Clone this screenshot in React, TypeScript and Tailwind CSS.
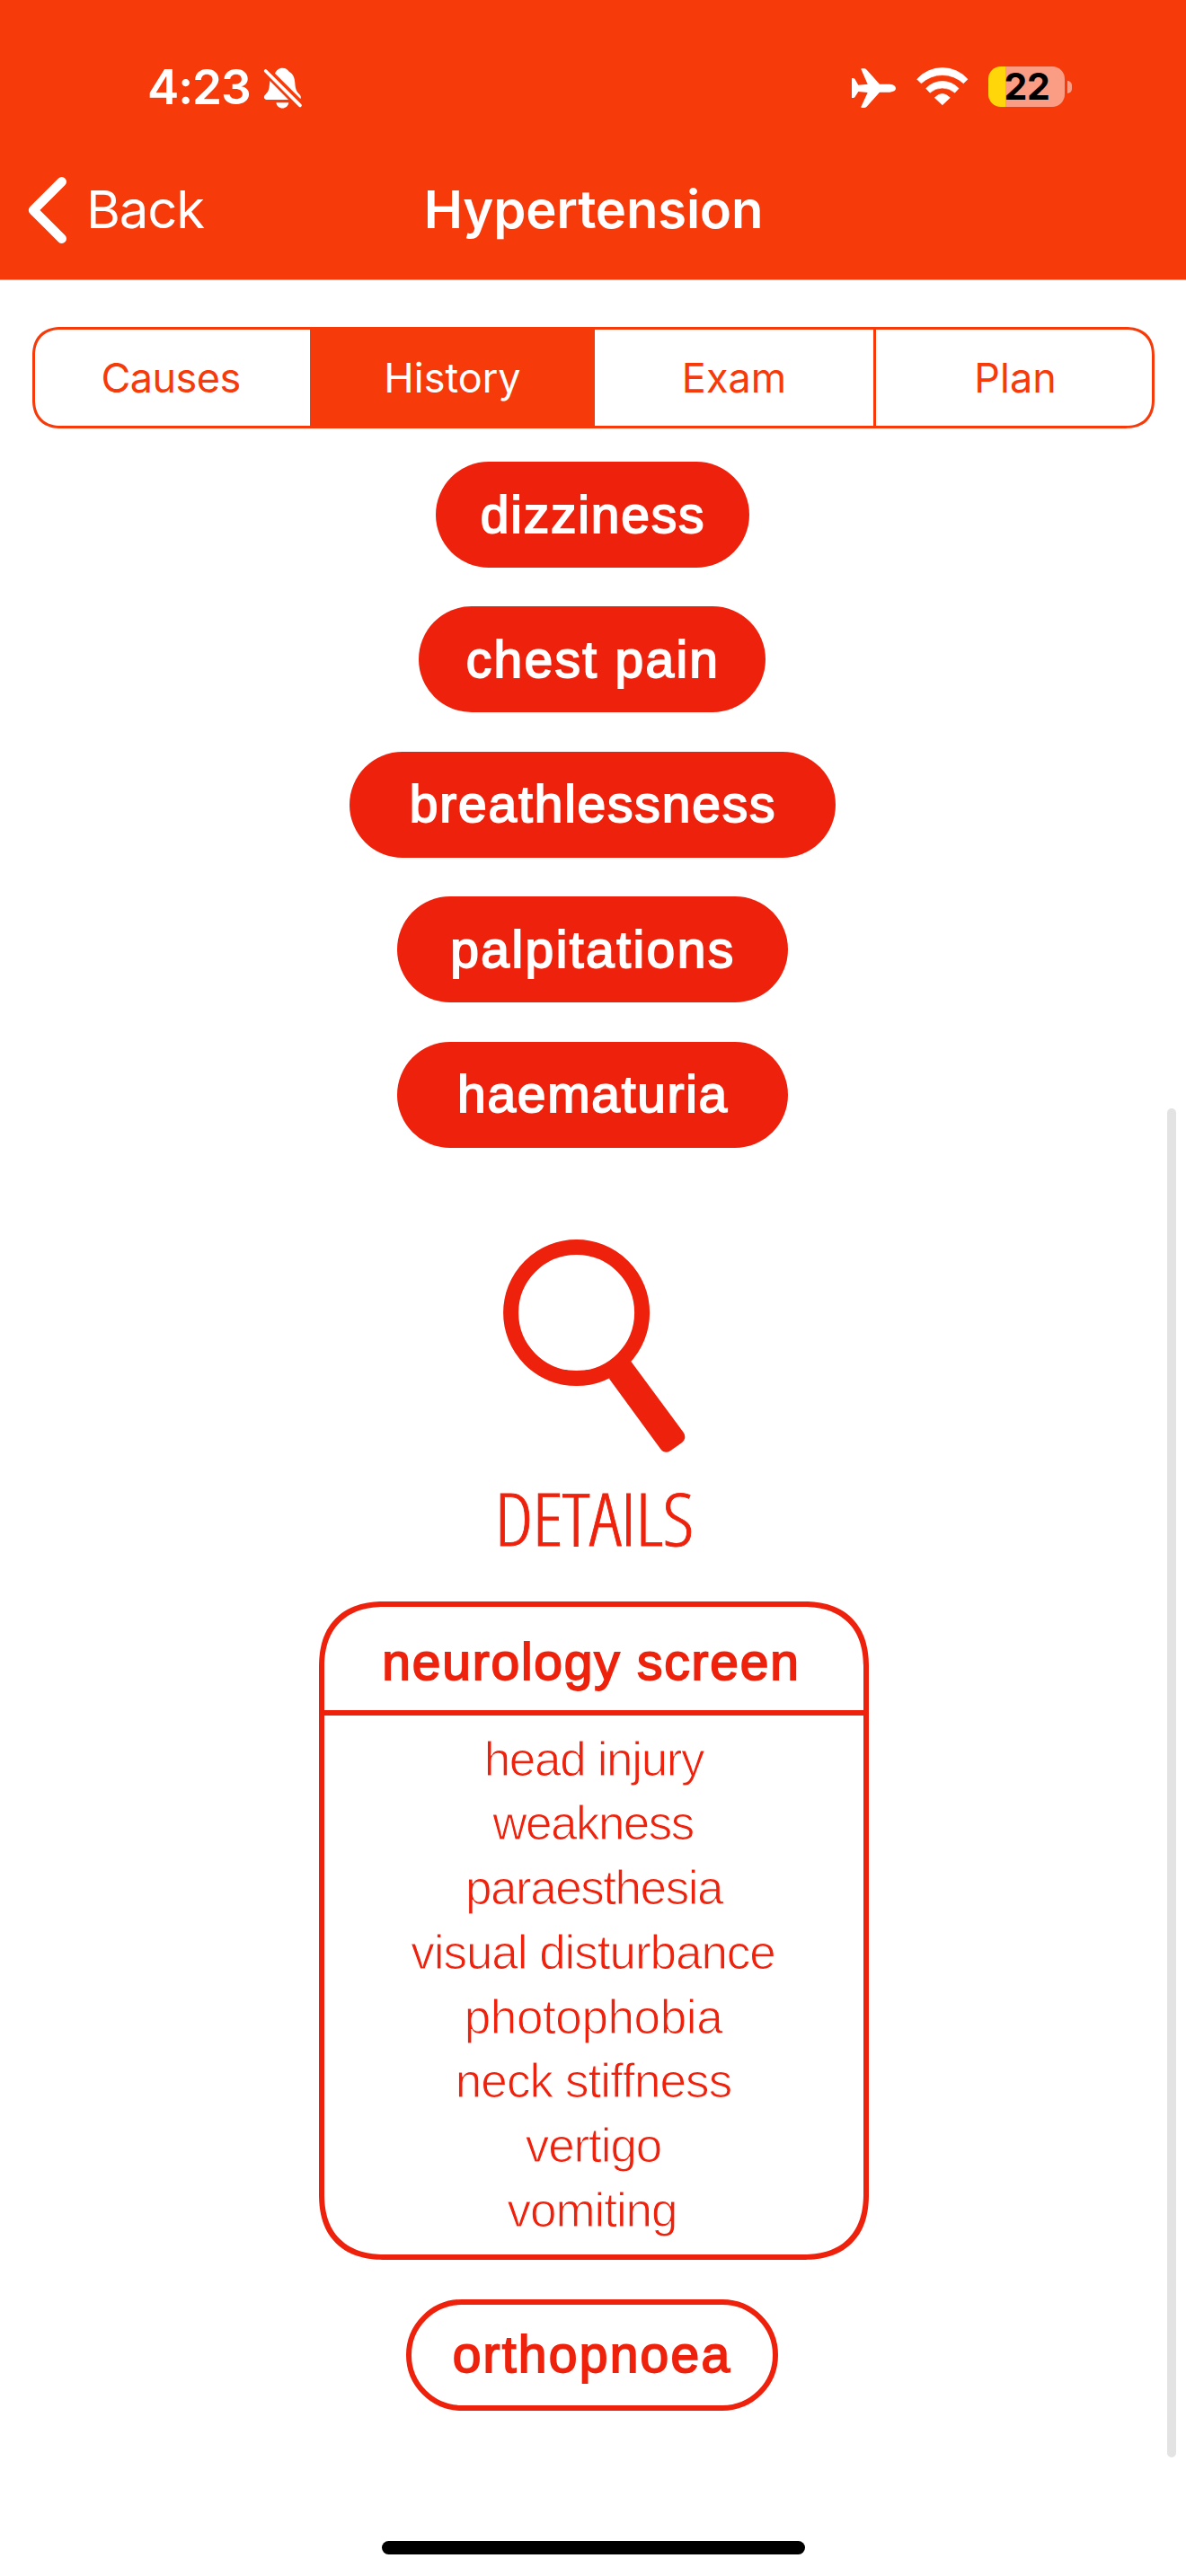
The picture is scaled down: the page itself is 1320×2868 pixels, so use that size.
const symptoms = [
  { label: "dizziness", box: "w-[349px]", text: "tracking-[1.8px]" },
  { label: "chest pain", box: "w-[386px]", text: "tracking-[2.29px]" },
  { label: "breathlessness", box: "w-[541px]", text: "tracking-[1.79px]" },
  { label: "palpitations", box: "w-[435px]", text: "tracking-[2.43px]" },
  { label: "haematuria", box: "w-[435px]", text: "tracking-[1.67px]" },
];

const screenItems = [
  { label: "head injury", text: "tracking-[-1.34px] pl-[1px]" },
  { label: "weakness", text: "tracking-[-1.54px] pr-[1px]" },
  { label: "paraesthesia", text: "tracking-[-1.45px] pl-[1px]" },
  { label: "visual disturbance", text: "tracking-[-1.04px] pr-[1px]" },
  { label: "photophobia", text: "tracking-[-0.39px]" },
  { label: "neck stiffness", text: "tracking-[-0.9px]" },
  { label: "vertigo", text: "tracking-[-1.1px]" },
  { label: "vomiting", text: "tracking-[-1.06px] pr-[3px]" },
];

const tabs = [
  { label: "Causes", style: "w-[306px] pr-[4px] tracking-[-0.55px]" },
  { label: "History", style: "w-[317px] bg-[#f63a0a] text-white" },
  { label: "Exam", style: "w-[313px] border-r-[3px] border-[#f63a0a]" },
  { label: "Plan", style: "w-[307px] pl-[3px]" },
];

function SilentBell() {
  return (
    <svg viewBox="876 102 132 144" className="ml-[14px] h-[48px] w-[44px]" fill="white">
      <path d="M915 125C920 114 928 107 940 107C952 107 958 113 963 120C977 127 981 142 982 158C983 178 988 186 996 194C1002 200 1003 205 1000 210Z" />
      <path d="M898 150L960 213H889C879 213 876 205 881 198C888 190 894 186 896 170Z" />
      <path d="M919 223H961C957 248 923 248 919 223Z" />
      <path d="M884 117L999 232" stroke="white" strokeWidth="11" strokeLinecap="round" />
    </svg>
  );
}

function Airplane() {
  return (
    <svg viewBox="141 108 147 132" className="h-[44px] w-[49px]" fill="white">
      <path d="M172 111Q172 109 175 109H182Q187 109 191 113L234 161H268Q288 163 288 175Q288 186 268 188H234L191 236Q187 240 182 240H175Q172 240 172 237L194 189L163 186L151 205Q149 207 146 207H141V141H146Q149 141 151 143L163 164L194 161Z" />
    </svg>
  );
}

function Wifi() {
  return (
    <svg viewBox="359 105 174 128" className="mb-[3px] ml-[23px] h-[43px] w-[58px]" fill="white" stroke="white" strokeWidth="2" strokeLinejoin="round">
      <path d="M361 144A113 113 0 0 1 530 144L516 158A103 103 0 0 0 375 158Z" />
      <path d="M391 175A74 74 0 0 1 500 175L487 189A63 63 0 0 0 404 189Z" />
      <path d="M420 206Q445 180 471 206L445.500 230Z" />
    </svg>
  );
}

function Battery() {
  return (
    <div className="mb-[2px] ml-[22px] flex items-center">
      <div className="flex h-[45px] w-[85px] items-center justify-center rounded-[14px] bg-[linear-gradient(to_right,#ffd60a_19px,#fb9d85_19px)]">
        <span className="pl-[1px] text-[41px] leading-[45px] font-bold tracking-[-0.33px] text-black">22</span>
      </div>
      <div className="ml-[3px] h-[14px] w-[5px] rounded-r-full bg-[#fb9d85]" />
    </div>
  );
}

function Magnifier() {
  return (
    <svg viewBox="559 1379 206 238" className="h-[238px] w-[206px]">
      <circle cx="640.6" cy="1460.600" r="73" fill="none" stroke="#ee220c" strokeWidth="17" />
      <path
        d="M684 1516L701.500 1515L759.500 1593.500Q764 1600 757.500 1605.500L745.500 1614Q739 1618.500 734 1612L677 1534Z"
        fill="#ee220c"
      />
    </svg>
  );
}

export default function App() {
  return (
    <div className="relative flex h-[2868px] w-[1320px] flex-col overflow-hidden bg-white font-['Liberation_Sans',sans-serif]">
      <header className="h-[312px] border-b border-[#b2b2b2] bg-[#f63a0a] font-['Inter',sans-serif] text-white">
        <div className="flex h-[195px] items-center justify-between pr-[127px] pl-[164px]">
          <div className="flex items-center">
            <span className="text-[53px] leading-none font-semibold tracking-[-1.07px]">4:23</span>
            <SilentBell />
          </div>
          <div className="flex items-center">
            <Airplane />
            <Wifi />
            <Battery />
          </div>
        </div>
        <nav className="grid h-[76px] grid-cols-3 items-center text-[58px] leading-none">
          <div className="flex items-center pl-[31px]">
            <svg viewBox="0 0 43 74" className="mt-[2px] h-[74px] w-[43px]" fill="none" stroke="white" strokeWidth="10.4" strokeLinecap="round" strokeLinejoin="round">
              <path d="M37.800 5.300L6 37L37.800 68.700" />
            </svg>
            <span className="ml-[22px] tracking-[-1.1px]">Back</span>
          </div>
          <h1 className="pl-[1px] text-center font-semibold tracking-[-0.2px]">Hypertension</h1>
        </nav>
      </header>

      <div className="mt-[52px] ml-[36px] flex h-[113px] w-[1249px] overflow-hidden rounded-[32px] border-[3px] border-[#f63a0a] font-['Inter',sans-serif] text-[45px] text-[#f63a0a] [corner-shape:superellipse(1.2)]">
        {tabs.map((tab) => (
          <div key={tab.label} className={`flex shrink-0 items-center justify-center ${tab.style}`}>
            {tab.label}
          </div>
        ))}
      </div>

      <main className="flex flex-col items-center pt-[37px] text-[#ee220c]">
        <div className="flex flex-col items-center gap-[43.4px] pr-[2px] text-[57px] leading-none text-white">
          {symptoms.map((s) => (
            <div key={s.label} className={`flex h-[118px] items-center justify-center rounded-full bg-[#ee220c] pl-[2px] ${s.box}`}>
              <span className={`[-webkit-text-stroke:1.8px_white] ${s.text}`}>{s.label}</span>
            </div>
          ))}
        </div>

        <div className="mt-[102px] flex pl-[5px]">
          <Magnifier />
        </div>
        <h2 className="mt-[32px] h-[80px] scale-x-[1.085] pl-[2px] text-[81px] leading-[80px] font-light tracking-[-0.8px] [-webkit-text-stroke:0.8px_#ee220c] [font-family:'Open_Sans',sans-serif] [font-stretch:75%]">
          DETAILS
        </h2>

        <section className="mt-[53px] ml-[1px] h-[733px] w-[612px] rounded-[74px] border-[6px] border-[#ee220c] text-center [corner-shape:superellipse(1.25)]">
          <h3 className="h-[121px] border-b-[6px] border-[#ee220c] pt-[4px] pr-[5px] text-[57px] leading-[115px] font-normal tracking-[1.75px] [-webkit-text-stroke:1.8px_#ee220c]">
            neurology screen
          </h3>
          <ul className="pt-[13px] text-[53px] leading-[71.75px] [-webkit-text-stroke:1px_white]">
            {screenItems.map((item) => (
              <li key={item.label} className={item.text}>
                {item.label}
              </li>
            ))}
          </ul>
        </section>

        <div className="mt-[44px] mr-[2px] flex h-[124px] w-[414px] items-center justify-center rounded-full border-[6px] border-[#ee220c] text-[57px] leading-none tracking-[2.22px] [-webkit-text-stroke:1.8px_#ee220c]">
          orthopnoea
        </div>
      </main>

      <div className="absolute top-[1234px] right-[11px] h-[1502px] w-[10px] rounded-full bg-[#e3e3e3]" />
      <div className="absolute bottom-[24px] left-[425px] h-[15px] w-[471px] rounded-full bg-black" />
    </div>
  );
}
